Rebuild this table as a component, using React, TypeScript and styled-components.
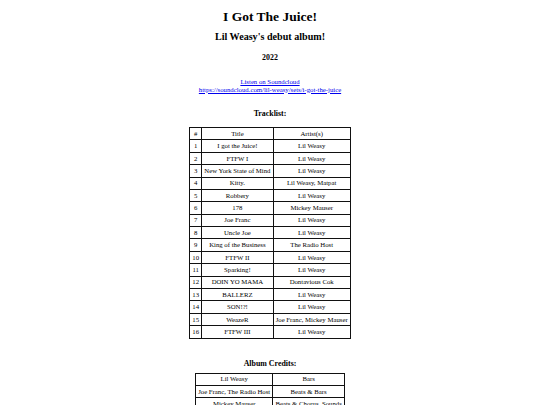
import React from "react";
import styled, { createGlobalStyle } from "styled-components";

const GlobalStyle = createGlobalStyle`
  html, body {
    margin: 0;
    padding: 0;
    background: #ffffff;
  }
  body {
    font-family: "Liberation Serif", "Times New Roman", serif;
    color: #000;
  }
`;

const Page = styled.main`
  display: flow-root;
  padding-top: 9.2px;
  text-align: center;
  font-family: "Liberation Serif", "Times New Roman", serif;
  font-size: 6.75px;
`;

const Title = styled.h1`
  margin: 0;
  font-size: 13.5px;
  line-height: 16px;
  font-weight: bold;
`;

const Subtitle = styled.h2`
  margin: 6.2px 0 0;
  font-size: 10.125px;
  line-height: 12px;
  font-weight: bold;
`;

const Heading = styled.h3<{ $gap: number }>`
  margin: ${(p) => p.$gap}px 0 0;
  font-size: 7.9px;
  line-height: 9px;
  font-weight: bold;
`;

const Links = styled.p`
  margin: 16px 0 0;
  font-size: 6.75px;
  line-height: 7.8px;
`;

const Link = styled.a`
  color: #0000ee;
  text-decoration: underline;
  display: block;
  width: max-content;
  margin: 0 auto;
`;

const Table = styled.table<{ $gap: number }>`
  margin: ${(p) => p.$gap}px auto 0;
  border-collapse: collapse;
  border: 1px solid #222;
  font-size: 6.75px;
  line-height: 7.8px;
`;

const Cell = styled.td`
  border: 1px solid #111;
  padding: 1.8px 2.1px;
  text-align: center;
  white-space: nowrap;
`;

const tracks: [string, string][] = [
  ["I got the Juice!", "Lil Weasy"],
  ["FTFW I", "Lil Weasy"],
  ["New York State of Mind", "Lil Weasy"],
  ["Kitty.", "Lil Weasy, Matpat"],
  ["Robbery", "Lil Weasy"],
  ["178", "Mickey Mauser"],
  ["Joe Franc", "Lil Weasy"],
  ["Uncle Joe", "Lil Weasy"],
  ["King of the Business", "The Radio Host"],
  ["FTFW II", "Lil Weasy"],
  ["Sparking!", "Lil Weasy"],
  ["DOIN YO MAMA", "Dontavious Cok"],
  ["BALLERZ", "Lil Weasy"],
  ["SON!?!", "Lil Weasy"],
  ["WeazeR", "Joe Franc, Mickey Mauser"],
  ["FTFW III", "Lil Weasy"],
];

const credits: [string, string][] = [
  ["Lil Weasy", "Bars"],
  ["Joe Franc, The Radio Host", "Beats & Bars"],
  ["Mickey Mauser", "Beats & Chorus, Sounds"],
];

export default function App() {
  return (
    <>
      <GlobalStyle />
      <Page>
        <Title>I Got The Juice!</Title>
        <Subtitle>Lil Weasy's debut album!</Subtitle>
        <Heading $gap={9.4}>2022</Heading>
        <Links>
          <Link href="#">Listen on Soundcloud</Link>
          <Link href="#">https://soundcloud.com/lil-weasy/sets/i-got-the-juice</Link>
        </Links>
        <Heading $gap={15.7}>Tracklist:</Heading>
        <Table $gap={8.9}>
          <tbody>
            <tr>
              <Cell>#</Cell>
              <Cell>Title</Cell>
              <Cell>Artist(s)</Cell>
            </tr>
            {tracks.map(([t, a], i) => (
              <tr key={i}>
                <Cell>{i + 1}</Cell>
                <Cell>{t}</Cell>
                <Cell>{a}</Cell>
              </tr>
            ))}
          </tbody>
        </Table>
        <Heading $gap={20.8}>Album Credits:</Heading>
        <Table $gap={4.2}>
          <tbody>
            {credits.map(([n, r], i) => (
              <tr key={i}>
                <Cell>{n}</Cell>
                <Cell>{r}</Cell>
              </tr>
            ))}
          </tbody>
        </Table>
      </Page>
    </>
  );
}
